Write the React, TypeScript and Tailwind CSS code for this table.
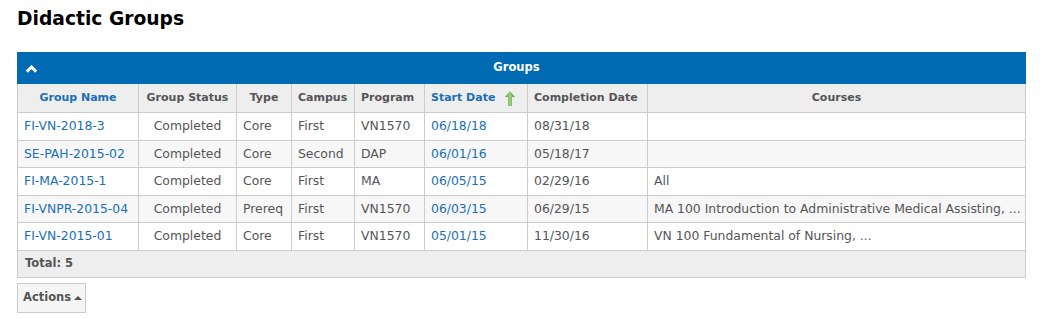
type Row = {
  name: string;
  status: string;
  type: string;
  campus: string;
  program: string;
  start: string;
  end: string;
  courses: string;
};

const rows: Row[] = [
  { name: 'FI-VN-2018-3', status: 'Completed', type: 'Core', campus: 'First', program: 'VN1570', start: '06/18/18', end: '08/31/18', courses: '' },
  { name: 'SE-PAH-2015-02', status: 'Completed', type: 'Core', campus: 'Second', program: 'DAP', start: '06/01/16', end: '05/18/17', courses: '' },
  { name: 'FI-MA-2015-1', status: 'Completed', type: 'Core', campus: 'First', program: 'MA', start: '06/05/15', end: '02/29/16', courses: 'All' },
  { name: 'FI-VNPR-2015-04', status: 'Completed', type: 'Prereq', campus: 'First', program: 'VN1570', start: '06/03/15', end: '06/29/15', courses: 'MA 100 Introduction to Administrative Medical Assisting, ...' },
  { name: 'FI-VN-2015-01', status: 'Completed', type: 'Core', campus: 'First', program: 'VN1570', start: '05/01/15', end: '11/30/16', courses: 'VN 100 Fundamental of Nursing, ...' },
];

const SortArrow = () => (
  <svg width="10" height="15" viewBox="0 0 10 15" className="inline-block">
    <defs>
      <linearGradient id="g" x1="0" x2="1" y1="0" y2="0">
        <stop offset="0" stopColor="#4f9a3a" />
        <stop offset="0.5" stopColor="#9bd37e" />
        <stop offset="1" stopColor="#4a9236" />
      </linearGradient>
    </defs>
    <path d="M5 0 L10 6 L7 6 L7 15 L3 15 L3 6 L0 6 Z" fill="url(#g)" />
  </svg>
);

// header cell base, colour is set per cell
const th = 'border border-[#cccccc] px-[6px] font-bold text-[11px] whitespace-nowrap';
const td = 'border border-[#cccccc] px-[6px] h-[27.6px] whitespace-nowrap';

export default function App() {
  return (
    <div className="bg-white px-[17px] pt-[7px] text-[#555555]" style={{ fontFamily: '"DejaVu Sans", Verdana, sans-serif' }}>
      <h1 className="text-[18.7px] font-bold text-black leading-[24px]">Didactic Groups</h1>
      <table className="mt-[21px] w-[1009px] table-fixed border-collapse text-[12.4px]">
        <colgroup>
          <col className="w-[121px]" />
          <col className="w-[98px]" />
          <col className="w-[55px]" />
          <col className="w-[63px]" />
          <col className="w-[70px]" />
          <col className="w-[103px]" />
          <col className="w-[120px]" />
          <col />
        </colgroup>
        <thead>
          <tr className="h-[31px] bg-[#006bb3] text-white">
            <th colSpan={8} className="relative border border-[#006bb3] pr-[10px] text-[11.5px] font-bold">
              <svg width="13" height="8" viewBox="0 0 13 8" className="absolute left-[7px] top-[12px]">
                <path d="M1.8 6.6 L6.5 2 L11.2 6.6" fill="none" stroke="#ffffff" strokeWidth="3" />
              </svg>
              Groups
            </th>
          </tr>
          <tr className="h-[29px] bg-[#eeeeee]">
            <th className={`${th} text-center text-[#1a6fb5]`}>Group Name</th>
            <th className={`${th} text-center text-[#555555]`}>Group Status</th>
            <th className={`${th} text-center text-[#555555]`}>Type</th>
            <th className={`${th} text-left text-[#555555]`}>Campus</th>
            <th className={`${th} text-left text-[#555555]`}>Program</th>
            <th className={`${th} text-left text-[#1a6fb5]`}>
              <span className="inline-flex items-center gap-[10px]">
                Start Date <SortArrow />
              </span>
            </th>
            <th className={`${th} text-left text-[#555555]`}>Completion Date</th>
            <th className={`${th} text-center text-[#555555]`}>Courses</th>
          </tr>
        </thead>
        <tbody>
          {rows.map((r, i) => (
            <tr key={r.name} className={i % 2 === 1 ? 'bg-[#f7f7f7]' : 'bg-white'}>
              <td className={`${td} text-[#1a6fb5]`}>{r.name}</td>
              <td className={`${td} text-center`}>{r.status}</td>
              <td className={td}>{r.type}</td>
              <td className={td}>{r.campus}</td>
              <td className={td}>{r.program}</td>
              <td className={`${td} text-[#1a6fb5]`}>{r.start}</td>
              <td className={td}>{r.end}</td>
              <td className={`${td} overflow-hidden`}>{r.courses}</td>
            </tr>
          ))}
        </tbody>
        <tfoot>
          <tr className="h-[27px] bg-[#eeeeee]">
            <td colSpan={8} className="border border-[#cccccc] px-[7px] text-[11.5px] font-bold">
              Total: 5
            </td>
          </tr>
        </tfoot>
      </table>
      <button className="mt-[5px] flex h-[30px] items-center gap-[3px] border border-[#cccccc] bg-[#f5f5f5] pl-[5px] pr-[3px] text-[11.5px] font-bold text-[#555555]">
        Actions
        <svg width="8" height="4" viewBox="0 0 8 4">
          <path d="M0 4 L4 0 L8 4 Z" fill="#555555" />
        </svg>
      </button>
    </div>
  );
}
